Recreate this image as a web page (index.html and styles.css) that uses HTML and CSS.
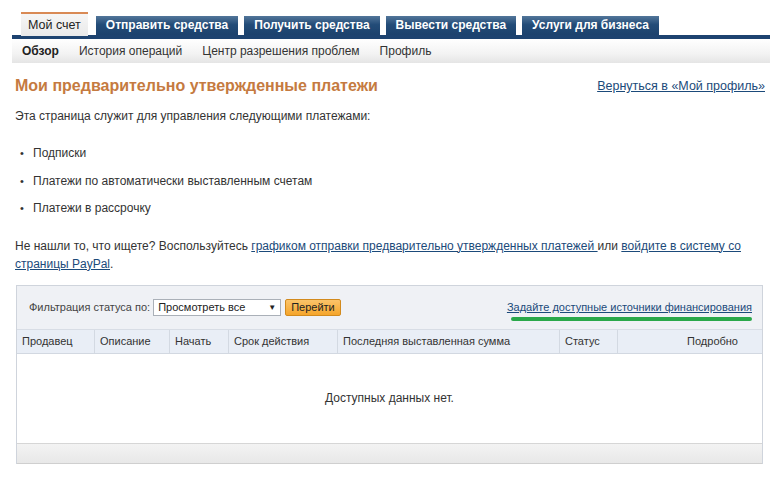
FILE: index.html
```html
<!DOCTYPE html>
<html lang="ru">
<head>
    <meta charset="UTF-8">
    <title>Предварительно утвержденные платежи</title>
    <link rel="stylesheet" href="styles.css">
</head>
<body>
    <div class="nav">
        <div class="tabs">
            <a class="tab active">Мой счет</a>
            <a class="tab">Отправить средства</a>
            <a class="tab">Получить средства</a>
            <a class="tab">Вывести средства</a>
            <a class="tab">Услуги для бизнеса</a>
        </div>
        <div class="subnav">
            <a class="current">Обзор</a>
            <a>История операций</a>
            <a>Центр разрешения проблем</a>
            <a>Профиль</a>
        </div>
    </div>

    <div class="content">
        <div class="title-row">
            <h1>Мои предварительно утвержденные платежи</h1>
            <a class="link" href="#">Вернуться в «Мой профиль»</a>
        </div>

        <p class="intro">Эта страница служит для управления следующими платежами:</p>

        <ul class="kinds">
            <li>Подписки</li>
            <li>Платежи по автоматически выставленным счетам</li>
            <li>Платежи в рассрочку</li>
        </ul>

        <p class="hint">Не нашли то, что ищете? Воспользуйтесь <a class="link" href="#">графиком отправки предварительно утвержденных платежей </a>или <a class="link" href="#">войдите в систему со страницы PayPal</a>.</p>

        <div class="box">
            <div class="filter">
                <span>Фильтрация статуса по:</span>
                <div class="select">Просмотреть все<span class="arrow">▼</span></div>
                <button class="go">Перейти</button>
                <a class="link funding" href="#">Задайте доступные источники финансирования</a>
            </div>
            <div class="thead">
                <div class="c1">Продавец</div>
                <div class="c2">Описание</div>
                <div class="c3">Начать</div>
                <div class="c4">Срок действия</div>
                <div class="c5">Последняя выставленная сумма</div>
                <div class="c6">Статус</div>
                <div class="c7">Подробно</div>
            </div>
            <div class="empty">Доступных данных нет.</div>
            <div class="tfoot"></div>
        </div>
    </div>
</body>
</html>
```

FILE: styles.css
```css
body {
    margin: 0;
    background: #fff;
    font-family: "Liberation Sans", Arial, sans-serif;
    font-size: 12px;
    color: #333;
}

a {
    cursor: pointer;
}

/* Вкладки */
.nav {
    margin: 0 12px;
    padding-top: 12px;
}

.tabs {
    display: flex;
    align-items: flex-end;
    gap: 6px;
    padding-left: 9px;
    border-bottom: 4px solid #1d4370;
}

.tab {
    display: block;
    height: 19px;
    line-height: 19px;
    padding: 0 10px;
    font-weight: bold;
    font-size: 12px;
    color: #fff;
    background: linear-gradient(#52769a, #234c78 45%, #1c426d);
}

.tab.active {
    height: 22px;
    line-height: 22px;
    padding: 0 7px;
    margin-right: 2px;
    margin-bottom: -1px;
    border-top: 2px solid #d98a55;
    font-weight: normal;
    font-size: 12.5px;
    color: #222;
    background: linear-gradient(#f6f6f6, #e9e9e9);
}

.subnav {
    display: flex;
    gap: 20px;
    height: 24px;
    line-height: 24px;
    padding-left: 10px;
    font-size: 12px;
    background: linear-gradient(#fff, #f3f3f3 60%, #e5e5e5);
}

.subnav a {
    color: #333;
}

.subnav a.current {
    font-weight: bold;
    color: #222;
}

/* Основная часть */
.content {
    padding: 0 17px 0 15px;
}

.title-row {
    display: flex;
    justify-content: space-between;
    align-items: center;
    margin-top: 14px;
}

h1 {
    margin: 0;
    font-size: 16px;
    color: #c57a40;
}

.link {
    color: #1b4a7a;
    text-decoration: underline;
}

.title-row .link {
    font-size: 12.5px;
}

.intro {
    margin: 14px 0 0;
}

.kinds {
    margin: 23px 0 0;
    padding-left: 0;
    list-style: none;
}

.kinds li {
    height: 27.5px;
    line-height: 15px;
}

.kinds li::before {
    content: "•";
    display: inline-block;
    width: 13px;
    padding-left: 5px;
    font-size: 11px;
}

.hint {
    margin: 8px 0 0;
    line-height: 18px;
}

/* Таблица */
.box {
    margin: 12px 2px 0 1px;
    border: 1px solid #cfd4dc;
    border-bottom: none;
    font-size: 11px;
}

.filter {
    position: relative;
    display: flex;
    align-items: center;
    height: 43px;
    padding-left: 12px;
    background: #eff1f5;
    color: #444;
}

.select {
    display: flex;
    justify-content: space-between;
    align-items: center;
    width: 118px;
    height: 15px;
    margin-left: 3px;
    padding: 0 4px;
    border: 1px solid #aab0b8;
    background: #fff;
    color: #222;
}

.arrow {
    font-size: 8px;
}

.go {
    height: 17px;
    margin-left: 4px;
    padding: 0 5px;
    border: 1px solid #d28a1d;
    border-radius: 2px;
    background: linear-gradient(#fbc46a, #f5a52b);
    font-family: inherit;
    font-size: 11px;
    color: #222;
}

.funding {
    margin-left: auto;
    margin-right: 10px;
}

/* зеленая подсветка под ссылкой */
.funding::after {
    content: "";
    position: absolute;
    left: 494px;
    right: 10px;
    top: 31px;
    height: 4px;
    border-radius: 2px;
    background: #2aa84a;
}

.thead {
    display: flex;
    height: 23px;
    line-height: 23px;
    background: #e9eef6;
    border-top: 1px solid #d8dde5;
    border-bottom: 1px solid #d2d8e1;
    color: #333;
}

.thead div {
    padding-left: 5px;
    border-left: 1px solid #d3d9e2;
}

.thead .c1 { width: 72px; border-left: none; }
.thead .c2 { width: 69px; }
.thead .c3 { width: 53px; }
.thead .c4 { width: 103px; }
.thead .c5 { width: 216px; }
.thead .c6 { width: 52px; }
.thead .c7 { flex: 1; text-align: right; padding-right: 24px; }

.empty {
    height: 89px;
    line-height: 88px;
    text-align: center;
    font-size: 12px;
    color: #333;
}

.tfoot {
    height: 19px;
    border-top: 1px solid #d6d6d6;
    background: linear-gradient(#f3f3f3, #e8e8e8);
    border-bottom: 1px solid #cfcfcf;
}
```
